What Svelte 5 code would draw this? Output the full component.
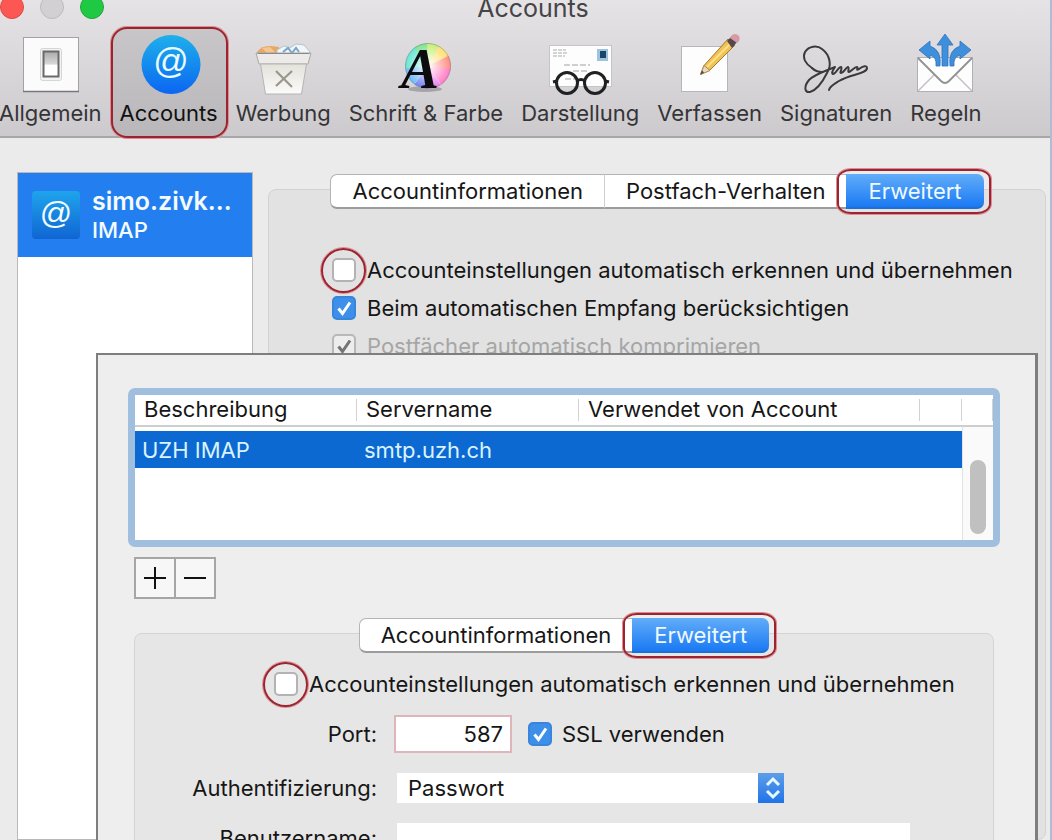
<script>
  let section = $state('Accounts');
  let accountTab = $state('Erweitert');
  let serverTab = $state('Erweitert');
  let detect = $state(false);
  let include = $state(true);
  let serverDetect = $state(false);
  let ssl = $state(true);

  const sections = ['Allgemein', 'Accounts', 'Werbung', 'Schrift & Farbe', 'Darstellung', 'Verfassen', 'Signaturen', 'Regeln'];
</script>

{#snippet tick()}
  <svg class="tick" viewBox="0 0 24 24" aria-hidden="true"><path d="M6.5 12.5l4 5L18 6.5" /></svg>
{/snippet}

{#snippet icon(name)}
  <svg class="icon" viewBox="0 0 66 62" aria-hidden="true">
    {#if name === 'Allgemein'}
      <rect x="6.5" y="4.5" width="55" height="54" fill="#fbfbfb" stroke="#a2a2a4" />
      <path d="M6 58.5h56" stroke="#77777a" stroke-width="1.5" />
      <rect x="23.5" y="15.5" width="21" height="32" rx="2" fill="#f3f3f3" stroke="#d5d5d5" />
      <rect x="26.5" y="18.5" width="15" height="25" fill="url(#switch)" stroke="#6a6a6c" stroke-width="2" />
    {:else if name === 'Accounts'}
      <circle cx="35" cy="31.5" r="29.5" fill="url(#at)" />
      <text x="35" y="40" text-anchor="middle" font-family="Liberation Sans, sans-serif" font-size="35" fill="#e9fbff">@</text>
    {:else if name === 'Werbung'}
      <path d="M7 19q5-7 14-6l8 1 1 8H8z" fill="#e7a765" />
      <path d="M12 15l8-1 5 5-8 1z" fill="#f4c693" />
      <path d="M27 17l7-4 6 2 6-4 8 1 6 7-1 4H27z" fill="#f0f6fa" stroke="#b3c5d1" stroke-width="1" />
      <path d="M33 19l5-4 4 5 4-5 3 4" fill="none" stroke="#78a5cb" stroke-width="2" />
      <path d="M6 20h55l-3 11H9z" fill="#ecebea" stroke="#a9a9a5" />
      <path d="M7.5 20.500h52" stroke="#8a8a8a" />
      <path d="M10.500 31h46l-5 30h-36z" fill="url(#bin)" stroke="#b4b4b4" />
      <path d="M26 38l16 16M42 38L26 53" stroke="#9a968a" stroke-width="2.200" />
    {:else if name === 'Schrift & Farbe'}
      <ellipse cx="32" cy="56" rx="17" ry="3" fill="#777" opacity=".5" />
      <g clip-path="url(#disc)">
        <rect x="10" y="8" width="50" height="50" fill="#fff" />
        <path d="M35 33L12 6h24z" fill="#7be38c" />
        <path d="M35 33L34 6h18z" fill="#c5ef74" />
        <path d="M35 33L50 6l14 16z" fill="#ffdf6d" />
        <path d="M35 33l28-14v20z" fill="#ff8a80" />
        <path d="M35 33l28 4-10 22z" fill="#ff78c4" />
        <path d="M35 33l19 28H34z" fill="#e87bf2" />
        <path d="M35 33v28H14z" fill="#6f7ff0" />
        <path d="M35 33L14 61 6 34z" fill="#69b9f5" />
        <path d="M35 33L6 36l8-32z" fill="#62e6cf" />
        <circle cx="35" cy="33" r="23" fill="url(#glow)" />
      </g>
      <circle cx="35" cy="33" r="22.500" fill="none" stroke="#888" opacity=".6" />
      <text x="8" y="55" font-family="Liberation Serif, serif" font-weight="700" font-style="italic" font-size="57" fill="#0c0c0e">A</text>
    {:else if name === 'Darstellung'}
      <rect x="2.500" y="12.500" width="62" height="41" fill="#fdfdfd" stroke="#c5c5c7" />
      <path d="M6 17h13M6 20h14M6 23h12" stroke="#c6c6c6" stroke-width="1.500" stroke-dasharray="4 1" />
      <path d="M17 32h26M26 38h14M18 46h12" stroke="#cfcfcf" stroke-width="2" stroke-dasharray="6 2" />
      <rect x="50" y="16" width="11" height="12" fill="#9cc3df" />
      <rect x="53" y="18" width="6" height="7" fill="#1e4663" />
      <g fill="none" stroke="#1f2022" stroke-width="3">
        <circle cx="20" cy="50" r="10.500" /><circle cx="48" cy="50" r="10.500" />
        <path d="M30 48q4-3 8 0M6 49l4-1M58 48l4 1" />
      </g>
    {:else if name === 'Verfassen'}
      <rect x="4.500" y="13.500" width="46" height="45" fill="#fdfdfd" stroke="#b6b6b9" />
      <path d="M23.500 41.500l3.500-9L51 6l7 6-25 25z" fill="#f3c251" stroke="#9c7a30" />
      <path d="M30 34L55 9" stroke="#fbe08b" stroke-width="2" />
      <path d="M23.500 41.500l3.500-9 6 5z" fill="#ecd9b6" stroke="#a98c5d" />
      <path d="M23.500 41.500l1.500-4 2 2z" fill="#444" />
      <path d="M50 8l4-4 6 5-5 6z" fill="#56474c" />
      <path d="M54 3q4-4 8 0 2 4-2 7l-7-5z" fill="#d59aa6" />
    {:else if name === 'Signaturen'}
      <path d="M9 35C3 31-1 25 2 19c4-6 12-7 17-3 8 6 10 16 5 24-4 8-10 17-17 19-6 1-6-6-1-12C12 41 23 38 32 34c-2 3-4 6-2 7 3 0 5-7 8-7 2 1-2 6 0 6 3 0 4-5 7-6 2 1-1 5 1 5 3-1 5-5 8-5 2 1-2 4 2 2 4-3 8-4 8-1 0 6-16 6-28 13-5 3-9 5-10 9" fill="none" stroke="#3a3a3d" stroke-width="2" stroke-linecap="round" stroke-linejoin="round" />
      <path d="M9 35q4 4 10 4" fill="none" stroke="#3a3a3d" stroke-width="2" stroke-linecap="round" />
    {:else}
      <rect x="4.500" y="24.500" width="55" height="34" fill="#fdfdfd" stroke="#b0b0b3" />
      <path d="M5 58l20-20M59 58L39 38" stroke="#c2c2c2" stroke-width="1.500" />
      <path d="M5 25l23 23q4 4 8 0l23-23" fill="#fff" stroke="#929292" stroke-width="1.800" />
      <g fill="#3f8fdc" stroke="#2e74bd" stroke-width=".8">
        <path d="M32 1l8 11h-5v21h-6V12h-5z" />
        <path d="M6 17l11-9v5q12 4 10 20h-4q1-9-6-11v4z" />
        <path d="M58 17L47 8v5q-12 4-10 20h4q-1-9 6-11v4z" />
      </g>
    {/if}
  </svg>
{/snippet}

<div class="page">
  <svg class="defs" aria-hidden="true">
    <defs>
      <linearGradient id="switch" x2="0" y2="1"><stop stop-color="#aaa" /><stop offset=".5" stop-color="#d8d8d8" /><stop offset=".55" stop-color="#fff" /></linearGradient>
      <linearGradient id="at" x2="0" y2="1"><stop stop-color="#1eb0ea" /><stop offset="1" stop-color="#0b66f2" /></linearGradient>
      <linearGradient id="badge" x2="0" y2="1"><stop stop-color="#1fa4ec" /><stop offset="1" stop-color="#1065d3" /></linearGradient>
      <linearGradient id="bin" x2="0" y2="1"><stop stop-color="#e3e2da" /><stop offset="1" stop-color="#fbfbfb" /></linearGradient>
      <radialGradient id="glow"><stop stop-color="#fff" /><stop offset="1" stop-color="#fff" stop-opacity="0" /></radialGradient>
      <clipPath id="disc"><circle cx="35" cy="33" r="23" /></clipPath>
    </defs>
  </svg>

  <header>
    <div class="titlebar">
      <div class="lights">
        <button class="light close" aria-label="Schließen"></button>
        <button class="light idle" aria-label="Minimieren" disabled></button>
        <button class="light zoom" aria-label="Zoomen"></button>
      </div>
      <h1>Accounts</h1>
    </div>
    <nav>
      {#each sections as name}
        <button class="tool" class:active={section === name} onclick={() => (section = name)}>
          {@render icon(name)}
          <span>{name}</span>
        </button>
      {/each}
    </nav>
  </header>

  <main>
    <aside>
      <button class="account">
        <svg class="badge" viewBox="0 0 48 48" aria-hidden="true">
          <rect width="48" height="48" rx="4" fill="url(#badge)" />
          <text x="24" y="33" text-anchor="middle" font-family="Liberation Sans, sans-serif" font-size="32" fill="#f2fcff">@</text>
        </svg>
        <span class="who"><b>simo.zivk…</b><small>IMAP</small></span>
      </button>
    </aside>

    <section class="panel">
      <div class="tabs">
        {#each ['Accountinformationen', 'Postfach-Verhalten', 'Erweitert'] as t}
          <button class:on={accountTab === t} onclick={() => (accountTab = t)}>{t}</button>
        {/each}
      </div>
      <div class="options">
        <label class="check"><span class="box ring"><input type="checkbox" bind:checked={detect} />{@render tick()}</span>Accounteinstellungen automatisch erkennen und übernehmen</label>
        <label class="check"><span class="box"><input type="checkbox" bind:checked={include} />{@render tick()}</span>Beim automatischen Empfang berücksichtigen</label>
        <label class="check off"><span class="box"><input type="checkbox" checked disabled />{@render tick()}</span>Postfächer automatisch komprimieren</label>
      </div>
    </section>
  </main>

  <div class="sheet">
    <div class="servers">
      <table>
        <colgroup><col class="c1" /><col class="c1" /><col /><col class="c4" /><col class="c5" /></colgroup>
        <thead>
          <tr><th><span>Beschreibung</span></th><th><span>Servername</span></th><th><span>Verwendet von Account</span></th><th><span></span></th><th><span></span></th></tr>
        </thead>
        <tbody>
          <tr><td>UZH IMAP</td><td>smtp.uzh.ch</td><td></td><td></td><td class="gutter"></td></tr>
        </tbody>
      </table>
      <div class="scroll"><div class="thumb"></div></div>
    </div>

    <div class="edit">
      <button aria-label="Hinzufügen"><svg viewBox="0 0 24 24"><path d="M1 12h22M12 1v22" /></svg></button>
      <button aria-label="Entfernen"><svg viewBox="0 0 24 24"><path d="M1 12h22" /></svg></button>
    </div>

    <section class="panel inner">
      <div class="tabs">
        {#each ['Accountinformationen', 'Erweitert'] as t}
          <button class:on={serverTab === t} onclick={() => (serverTab = t)}>{t}</button>
        {/each}
      </div>
      <label class="check wide"><span class="box ring"><input type="checkbox" bind:checked={serverDetect} />{@render tick()}</span>Accounteinstellungen automatisch erkennen und übernehmen</label>
      <div class="form">
        <label for="port">Port:</label>
        <div class="port">
          <input id="port" class="field" type="text" value="587" />
          <label class="check"><span class="box"><input type="checkbox" bind:checked={ssl} />{@render tick()}</span>SSL verwenden</label>
        </div>
        <label for="auth">Authentifizierung:</label>
        <div class="select">
          <select id="auth"><option>Passwort</option></select>
          <svg viewBox="0 0 26 30" aria-hidden="true"><path d="M9 12l6-6 6 6M9 18l6 6 6-6" /></svg>
        </div>
        <label for="user">Benutzername:</label>
        <input id="user" class="user" type="text" />
      </div>
    </section>
  </div>
</div>

<style>
  :global(body) { margin: 0; }
  .page, .page * { box-sizing: border-box; }
  .page {
    position: relative;
    height: 100vh;
    overflow: hidden;
    display: flex;
    flex-direction: column;
    background: #ebebeb;
    border-right: 2px solid #aebdd4;
    color: #161616;
    font: 22px/28px Inter, "Liberation Sans", sans-serif;
  }
  button, input, select { font: inherit; color: inherit; margin: 0; padding: 0; border: 0; background: none; }
  .defs { position: absolute; width: 0; height: 0; }

  header {
    flex: none;
    height: 138px;
    background: linear-gradient(#e5e3e5, #dad8da 45%, #cccacc);
    border-bottom: 2px solid #a8a7a8;
  }
  .titlebar { display: grid; grid-template-columns: 1fr auto 1fr; height: 26px; align-items: start; }
  .lights { display: flex; gap: 16px; margin-top: -5px; }
  .light { width: 24px; height: 24px; border-radius: 50%; }
  .close { background: #fc5753; border: 1px solid #df4744; }
  .idle { background: #d2d0d2; border: 1px solid #bcbabc; }
  .zoom { background: #20c944; border: 1px solid #1fa637; }
  h1 { margin: -6px 0 0 16px; font-size: 25px; line-height: 28px; font-weight: 400; color: #454447; }

  nav { display: flex; margin-left: -10px; height: 112px; }
  .tool {
    position: relative;
    flex: none;
    display: flex;
    flex-direction: column;
    align-items: center;
    gap: 4px;
    padding: 7px 9px 11px;
    color: #353437;
  }
  .icon { width: 66px; height: 62px; overflow: visible; }
  .tool.active { color: #111; background: linear-gradient(#c8c6c8, #b9b7b9); border-radius: 16px; }
  .tool.active::after, .tabs .on::after, .ring::after {
    content: "";
    position: absolute;
    border: 2px solid #9c2430;
    box-shadow: 0 0 0 1px #dd8d92;
    pointer-events: none;
  }
  .tool.active::after { inset: 1px -1px 0 0; border-radius: 16px; }

  main { flex: 1; display: flex; gap: 15px; padding: 34px 4px 0 17px; min-height: 0; }
  aside { flex: none; width: 236px; background: #fff; border: 1px solid #b9b9b9; }
  .account {
    display: flex;
    align-items: center;
    gap: 12px;
    width: 100%;
    height: 84px;
    padding: 0 14px;
    background: #237ff0;
    color: #f4fbff;
    text-align: left;
  }
  .badge { width: 48px; height: 48px; flex: none; }
  .who { display: flex; flex-direction: column; }
  .who b { font-size: 25px; line-height: 30px; font-weight: 600; }
  .who small { font-size: 22px; line-height: 28px; font-weight: 500; }

  .panel {
    flex: 1;
    margin-top: 17px;
    background: #e2e2e2;
    border: 1px solid #d2d2d2;
    border-radius: 8px;
  }
  .tabs { display: flex; justify-content: center; margin-top: -16px; }
  .tabs button {
    position: relative;
    height: 35px;
    padding: 0 21px;
    background: #fff;
    border: 1px solid #b4b4b4;
    border-bottom: 2px solid #9c9c9c;
    border-left-color: #d0d0d0;
    border-right: 0;
    line-height: 32px;
  }
  .tabs button:first-child { border-radius: 7px 0 0 7px; border-left-color: #b4b4b4; }
  .tabs button:last-child { border-right: 1px solid #b4b4b4; border-radius: 0 7px 7px 0; }
  .tabs .on {
    background: linear-gradient(#62adf9, #1a79f3);
    border: 0;
    border-bottom: 2px solid #1b6fd6;
    color: #eefaff;
  }
  .tabs button.on:last-child { border-right: 0; padding: 0 22px; }
  .tabs .on::after { inset: -5px -7px -7px -9px; border-radius: 14px / 10px; }

  .options { display: flex; flex-direction: column; gap: 10px; padding: 47px 20px 0 63px; }
  .check { display: flex; align-items: center; gap: 11px; white-space: nowrap; }
  .off { color: #a6a6a6; }
  .box { position: relative; flex: none; display: grid; width: 24px; height: 24px; }
  .box input, .tick { grid-area: 1 / 1; width: 24px; height: 24px; }
  .box input { appearance: none; background: #fff; border: 2px solid #b3b3b3; border-radius: 5px; }
  .box input:checked { background: #3d8fe9; border-color: #3985db; }
  .box input:disabled { background: #ededed; border-color: #b8b8b8; }
  .tick { fill: none; stroke: #fff; stroke-width: 3; visibility: hidden; pointer-events: none; z-index: 1; }
  .box input:checked + .tick { visibility: visible; }
  .off .tick { stroke: #747474; }
  .ring::after { inset: -10px -10px -11px -11px; border-radius: 50%; }

  .sheet {
    position: absolute;
    left: 96px;
    right: 12px;
    top: 353px;
    bottom: 0;
    overflow: hidden;
    padding: 33px 35px 0 30px;
    background: #eeeeee;
    border: 2px solid #7e7e7e;
    border-right-width: 3px;
    border-bottom: 0;
  }
  .servers {
    position: relative;
    height: 159px;
    background: #fff;
    border: 7px solid #a0bfde;
    border-radius: 7px;
  }
  table { width: 100%; table-layout: fixed; border-collapse: separate; border-spacing: 0; }
  .c1 { width: 222px; }
  .c4 { width: 42px; }
  .c5 { width: 31px; }
  th { height: 32px; padding: 0; border-bottom: 2px solid #cecece; font-weight: 400; text-align: left; white-space: nowrap; }
  th span { display: block; height: 22px; line-height: 20px; padding-left: 9px; border-right: 1px solid #d2d2d2; }
  td { height: 41px; padding: 0 0 0 7px; border-top: 4px solid #fff; background: #0c69d1; color: #d9f3ff; }
  td.gutter { background: #fafafa; }
  .scroll {
    position: absolute;
    right: 0;
    top: 32px;
    bottom: 0;
    width: 31px;
    padding: 33px 7px 6px;
    background: #fafafa;
    border-left: 1px solid #e2e2e2;
  }
  .thumb { height: 100%; border-radius: 8px; background: #c0c0c0; }

  .edit { display: flex; margin: 10px 0 0 6px; }
  .edit button { display: grid; place-items: center; width: 42px; height: 42px; background: #f7f7f7; border: 2px solid #a6a6a6; }
  .edit button + button { border-left: 0; width: 40px; }
  .edit svg { width: 24px; height: 24px; fill: none; stroke: #111; stroke-width: 2; }

  .inner { margin: 34px 6px 0; height: 300px; background: #e6e6e6; border-color: #d4d4d4; }
  .wide { margin: 17px 0 0 139px; }
  .form {
    display: grid;
    grid-template-columns: 242px 1fr;
    gap: 20px 17px;
    align-items: center;
    margin-top: 17px;
  }
  .form > label { text-align: right; white-space: nowrap; }
  .port { display: flex; align-items: center; gap: 16px; }
  .port .check { gap: 10px; }
  .field { width: 118px; height: 38px; padding: 0 7px; background: #fff; border: 2px solid #deb5b9; text-align: right; }
  .select { display: grid; width: 387px; height: 30px; margin-left: 3px; background: #fff; }
  .select select, .select svg { grid-area: 1 / 1; }
  .select select { appearance: none; padding-left: 11px; width: 100%; height: 30px; line-height: 28px; }
  .select svg { justify-self: end; width: 26px; height: 30px; background: linear-gradient(#5e9ee8, #1f74ea); fill: none; stroke: #e8f8ff; stroke-width: 3; pointer-events: none; }
  .user { width: 513px; height: 30px; margin-left: 3px; background: #fff; }
</style>
